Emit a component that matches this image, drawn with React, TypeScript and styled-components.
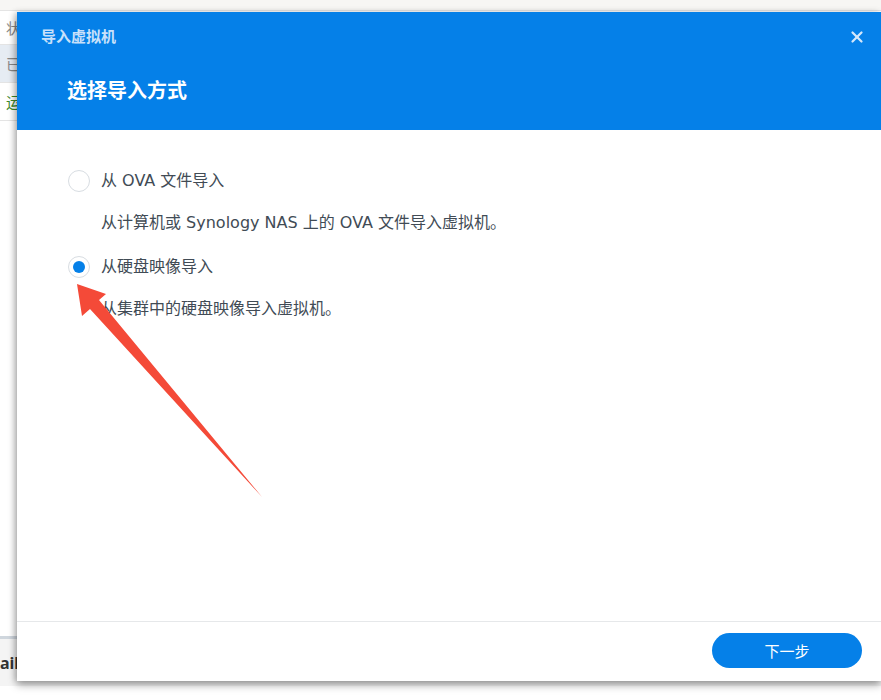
import styled, { createGlobalStyle } from "styled-components";
import { X } from "lucide-react";

const GlobalStyle = createGlobalStyle`
  html, body {
    margin: 0;
    padding: 0;
    width: 881px;
    height: 700px;
    overflow: hidden;
    background: #f3f3f3;
    font-family: "Noto Sans", "Noto Sans CJK SC", sans-serif;
  }
`;

const Page = styled.div`
  position: relative;
  width: 881px;
  height: 700px;
  overflow: hidden;
  background: linear-gradient(#f7f6f4 0, #f7f6f4 12px, #fff 12px);
`;

const BgTable = styled.div`
  display: flex;
  flex-direction: column;
  padding-top: 10px;
`;

const BgRow = styled.div<{ $bg?: string; $color?: string; $h: number }>`
  height: ${(p) => p.$h}px;
  display: flex;
  align-items: center;
  padding-left: 6px;
  font-size: 15px;
  color: ${(p) => p.$color || "#888"};
  background: ${(p) => p.$bg || "#fff"};
  border-top: 1px solid #e4e4e4;
`;

const BgFooter = styled.div`
  position: absolute;
  left: 0;
  top: 636px;
  width: 881px;
  height: 50px;
  display: flex;
  align-items: center;
  border-top: 3px solid #cfd6dd;
  background: #f4f4f4;
  font-weight: 700;
  font-size: 16px;
  color: #333;
  box-sizing: border-box;
`;

const Dialog = styled.div`
  position: absolute;
  left: 17px;
  top: 12px;
  width: 864px;
  height: 669px;
  background: #fff;
  display: flex;
  flex-direction: column;
  box-shadow: 0 4px 8px rgba(0, 0, 0, 0.35), -3px 0 6px rgba(0, 0, 0, 0.15);
`;

const Header = styled.div`
  height: 118px;
  background: #0580e8;
  display: flex;
  flex-direction: column;
  position: relative;
  flex-shrink: 0;
`;

const SmallTitle = styled.div`
  padding: 14px 0 0 24px;
  font-size: 15px;
  font-weight: 700;
  color: #c9e1fa;
  line-height: 20px;
`;

const BigTitle = styled.div`
  padding: 30px 0 0 50px;
  font-size: 20px;
  font-weight: 700;
  color: #fff;
  line-height: 30px;
`;

const CloseButton = styled.div`
  position: absolute;
  top: 16px;
  right: 15px;
  color: #d4e7fb;
  display: flex;
`;

const Body = styled.div`
  flex: 1;
  padding: 39px 0 0 51px;
  display: flex;
  flex-direction: column;
  font-family: "DejaVu Sans", "Noto Sans CJK SC", sans-serif;
`;

const Option = styled.div`
  display: flex;
  align-items: center;
  gap: 11px;
  height: 24px;
`;

const Radio = styled.div<{ $checked?: boolean }>`
  width: 22px;
  height: 22px;
  border-radius: 50%;
  border: 1px solid #d8dde2;
  box-sizing: border-box;
  display: flex;
  align-items: center;
  justify-content: center;
  background: #fff;
  flex-shrink: 0;
  &::after {
    content: "";
    width: 12px;
    height: 12px;
    border-radius: 50%;
    background: ${(p) => (p.$checked ? "#0580e8" : "transparent")};
  }
`;

const Label = styled.span`
  font-size: 16px;
  color: #414b55;
  line-height: 24px;
`;

const Desc = styled.div`
  font-size: 16px;
  color: #414b55;
  line-height: 24px;
  padding-left: 33px;
  margin: 18px 0 20px;
`;

const Footer = styled.div`
  height: 59px;
  border-top: 1px solid #e6e8ea;
  display: flex;
  align-items: center;
  justify-content: flex-end;
  padding-right: 19px;
  flex-shrink: 0;
`;

const NextButton = styled.button`
  width: 150px;
  height: 35px;
  border-radius: 18px;
  border: none;
  background: #0580e8;
  color: #fff;
  font-size: 15px;
  font-family: "Noto Sans CJK SC", sans-serif;
  margin-bottom: 3px;
`;

const Arrow = styled.svg`
  position: absolute;
  left: 0;
  top: 0;
  pointer-events: none;
`;

export default function App() {
  return (
    <>
      <GlobalStyle />
      <Page>
        <BgTable>
          <BgRow $h={33}>状</BgRow>
          <BgRow $h={37} $bg="#e6ecf3">已</BgRow>
          <BgRow $h={37} $color="#3e8a2a">运</BgRow>
          <BgRow $h={30}>&nbsp;</BgRow>
        </BgTable>
        <BgFooter>ail</BgFooter>
        <Dialog>
          <Header>
            <SmallTitle>导入虚拟机</SmallTitle>
            <BigTitle>选择导入方式</BigTitle>
            <CloseButton>
              <X size={18} strokeWidth={3} />
            </CloseButton>
          </Header>
          <Body>
            <Option>
              <Radio />
              <Label>从 OVA 文件导入</Label>
            </Option>
            <Desc>从计算机或 Synology NAS 上的 OVA 文件导入虚拟机。</Desc>
            <Option>
              <Radio $checked />
              <Label>从硬盘映像导入</Label>
            </Option>
            <Desc>从集群中的硬盘映像导入虚拟机。</Desc>
          </Body>
          <Footer>
            <NextButton>下一步</NextButton>
          </Footer>
        </Dialog>
        <Arrow width="881" height="700" viewBox="0 0 881 700">
          <polygon
            points="77,284 106,294 99,300 262,497 90,309 82,316"
            fill="#f44a38"
          />
        </Arrow>
      </Page>
    </>
  );
}
